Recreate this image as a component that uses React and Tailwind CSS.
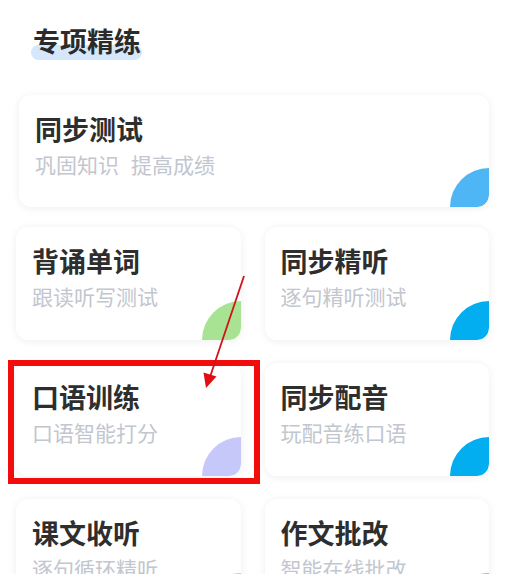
import React from "react";

const FONT = { fontFamily: '"Noto Sans CJK SC", "Noto Sans", sans-serif' };

function Card({ title, sub, leaf, wide }) {
  return (
    <div
      className={`relative overflow-hidden bg-white rounded-[12px] shadow-[0_1px_8px_rgba(0,0,0,0.07)] ${
        wide ? "h-[112px]" : "h-[113px]"
      } pl-[16px] pt-[20px]`}
    >
      <div className="text-[27px] leading-[28px] font-bold text-[#2e2e2e]">{title}</div>
      <div className="mt-[10px] text-[21px] leading-[22px] text-[#c2c6ce]">{sub}</div>
      <div className="absolute right-0 bottom-0 flex w-[39px] h-[39px] items-end justify-end">
        <div className={`w-[39px] h-[39px] rounded-tl-[39px] rounded-br-[12px] ${leaf}`} />
      </div>
    </div>
  );
}

export default function App() {
  return (
    <div className="relative w-[511px] h-[574px] overflow-hidden bg-white" style={FONT}>
      <div className="pl-[33px] pt-[27px]">
        <div className="relative inline-block">
          <span className="absolute left-[-2px] right-[-1px] top-[18px] h-[15px] rounded-full bg-[#d5e7fb]" />
          <span className="relative text-[27px] leading-[28px] font-bold text-[#2b2b2b]">专项精练</span>
        </div>
      </div>

      <div className="pl-[16px] pr-[22px] pt-[38px]">
        <div className="ml-[3px]">
          <Card
            wide
            title="同步测试"
            sub={
              <>
                巩固知识<span className="ml-[12px]">提高成绩</span>
              </>
            }
            leaf="bg-[#4fb6f5]"
          />
        </div>

        <div className="mt-[20px] grid grid-cols-2 gap-x-[24px] gap-y-[23px]">
          <Card title="背诵单词" sub="跟读听写测试" leaf="bg-[#a7e393]" />
          <Card title="同步精听" sub="逐句精听测试" leaf="bg-[#02aef0]" />
          <Card title="口语训练" sub="口语智能打分" leaf="bg-[#c6c8fa]" />
          <Card title="同步配音" sub="玩配音练口语" leaf="bg-[#02aef0]" />
          <Card title="课文收听" sub="逐句循环精听" leaf="bg-[#ffc46b]" />
          <Card title="作文批改" sub="智能在线批改" leaf="bg-[#ff9b7a]" />
        </div>
      </div>

      {/* annotation: red highlight box */}
      <div className="absolute left-[8px] top-[360px] w-[252px] h-[124px] border-[6px] border-[#f20c0c]" />

      {/* annotation: arrow */}
      <svg className="absolute left-0 top-0" width="511" height="574" viewBox="0 0 511 574">
        <line x1="244" y1="276" x2="210" y2="377" stroke="#d0121b" strokeWidth="1.8" />
        <polygon points="206,388 216.5,376.5 203.5,372.5" fill="#e00d14" />
      </svg>
    </div>
  );
}
